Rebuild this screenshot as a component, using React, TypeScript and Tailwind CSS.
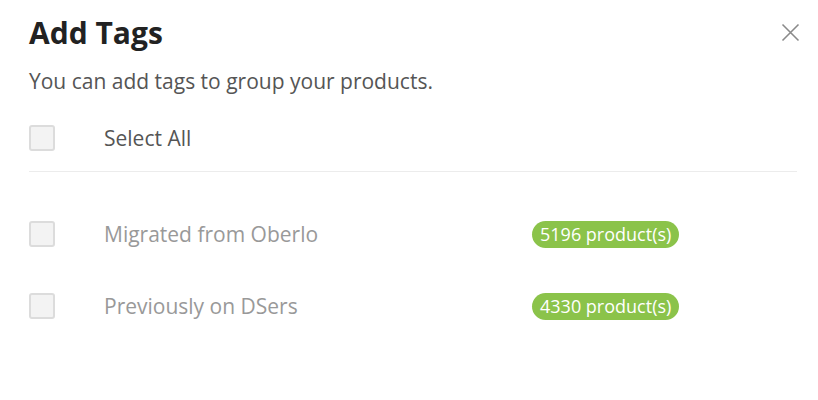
const TAGS = [
  { name: "Migrated from Oberlo", count: 5196 },
  { name: "Previously on DSers", count: 4330 },
];

function Box() {
  return <span className="block h-[26px] w-[26px] shrink-0 rounded-[3px] border-2 border-[#dcdcdc] bg-[#f3f3f3]" />;
}

export default function App() {
  return (
    <div className="h-[400px] w-[818px] bg-white pl-[29px] pr-[21px] pt-[14px] font-['Open_Sans',sans-serif]">
      <div className="flex items-start justify-between">
        <h1 className="text-[30px] font-bold leading-[38px] text-[#222]">Add Tags</h1>
        <button className="mt-[9px] mr-[-3px] text-[#8a8a8a]" aria-label="Close">
          <svg width="19" height="19" viewBox="0 0 19 19" fill="none" stroke="currentColor" strokeWidth="1.6">
            <path d="M1.5 1.5 17.5 17.5M17.5 1.5 1.5 17.5" />
          </svg>
        </button>
      </div>
      <p className="mt-[15px] text-[21px] leading-[28px] text-[#555]">You can add tags to group your products.</p>
      <div className="mt-[30px] flex h-[26px] items-center gap-[49px]">
        <Box />
        <span className="text-[21px] leading-[28px] text-[#555]">Select All</span>
      </div>
      <div className="mt-[20px] border-t border-[#ececec]" />
      <ul className="mt-[49px] flex flex-col gap-[46px]">
        {TAGS.map((tag) => (
          <li key={tag.name} className="flex h-[26px] items-center gap-[49px]">
            <Box />
            <span className="w-[379px] text-[21px] leading-[28px] text-[#999]">{tag.name}</span>
            <span className="rounded-full bg-[#8bc34a] px-[8px] text-[18px] font-medium leading-[27px] text-white">
              {tag.count} product(s)
            </span>
          </li>
        ))}
      </ul>
    </div>
  );
}
